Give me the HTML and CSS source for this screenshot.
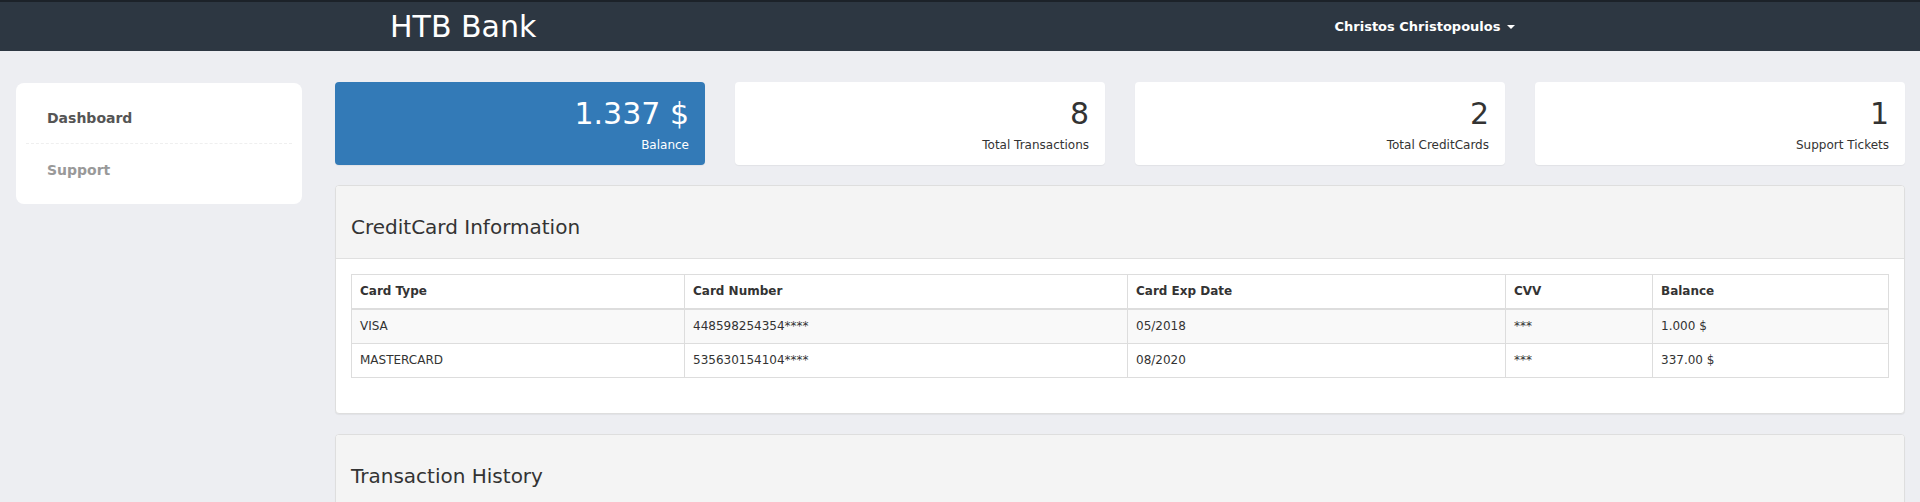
FILE: index.html
```html
<!DOCTYPE html>
<html lang="en">
<head>
<meta charset="utf-8">
<title>HTB Bank</title>
<link rel="stylesheet" href="styles.css">
</head>
<body>
<header class="navbar">
  <div class="navbar-inner">
    <a class="brand" href="#">HTB Bank</a>
    <a class="user-menu" href="#">Christos Christopoulos <span class="caret"></span></a>
  </div>
</header>

<div class="layout">
  <aside class="sidebar-col">
    <nav class="sidebar">
      <ul class="side-list">
        <li class="side-item active"><a href="#">Dashboard</a></li>
        <li class="side-item"><a href="#">Support</a></li>
      </ul>
    </nav>
  </aside>

  <main class="main-col">
    <section class="stats">
      <div class="stat stat-primary">
        <div class="stat-value">1.337 $</div>
        <div class="stat-label">Balance</div>
      </div>
      <div class="stat">
        <div class="stat-value">8</div>
        <div class="stat-label">Total Transactions</div>
      </div>
      <div class="stat">
        <div class="stat-value">2</div>
        <div class="stat-label">Total CreditCards</div>
      </div>
      <div class="stat">
        <div class="stat-value">1</div>
        <div class="stat-label">Support Tickets</div>
      </div>
    </section>

    <section class="panel">
      <div class="panel-heading">
        <h3 class="panel-title">CreditCard Information</h3>
      </div>
      <div class="panel-body">
        <table class="cards-table">
          <thead>
            <tr>
              <th>Card Type</th>
              <th>Card Number</th>
              <th>Card Exp Date</th>
              <th>CVV</th>
              <th>Balance</th>
            </tr>
          </thead>
          <tbody>
            <tr>
              <td>VISA</td>
              <td>448598254354****</td>
              <td>05/2018</td>
              <td>***</td>
              <td>1.000 $</td>
            </tr>
            <tr>
              <td>MASTERCARD</td>
              <td>535630154104****</td>
              <td>08/2020</td>
              <td>***</td>
              <td>337.00 $</td>
            </tr>
          </tbody>
        </table>
      </div>
    </section>

    <section class="panel">
      <div class="panel-heading">
        <h3 class="panel-title">Transaction History</h3>
      </div>
      <div class="panel-body">
        <div class="panel-spacer"></div>
      </div>
    </section>
  </main>
</div>
</body>
</html>
```

FILE: styles.css
```css
* { box-sizing: border-box; }

html, body {
  margin: 0;
  padding: 0;
}

body {
  font-family: "DejaVu Sans", "Noto Sans", sans-serif;
  font-size: 12px;
  line-height: 1.42857;
  color: #333;
  background: #edeef2;
}

a { text-decoration: none; }

/* Navbar */
.navbar {
  background: #2d3742;
  border-top: 2px solid #1c2229;
  height: 51px;
}

.navbar-inner {
  width: 1170px;
  margin: 0 auto;
  height: 49px;
  display: flex;
  align-items: center;
  justify-content: space-between;
  padding-left: 15px;
  padding-right: 30px;
}

.brand {
  color: #fff;
  font-size: 30px;
  line-height: 36px;
}

.user-menu {
  color: #fff;
  font-weight: bold;
  font-size: 13px;
  line-height: 18px;
  display: flex;
  align-items: center;
  white-space: pre;
}

.caret {
  display: inline-block;
  width: 0;
  height: 0;
  margin-left: 2px;
  border-top: 4px solid #fff;
  border-left: 4px solid transparent;
  border-right: 4px solid transparent;
}

/* Layout */
.layout {
  display: flex;
  padding-top: 31px;
}

.sidebar-col {
  width: 320px;
  flex: none;
  padding: 1px 18px 0 16px;
}

.sidebar {
  background: #fff;
  border-radius: 8px;
  padding: 9px 10px;
}

.side-list {
  list-style: none;
  margin: 0;
  padding: 0;
}

.side-item + .side-item {
  border-top: 1px dashed #efefef;
}

.side-item a {
  display: block;
  padding: 16px 20px 15px 21px;
  font-size: 14px;
  line-height: 20px;
  font-weight: bold;
  color: #999;
}

.side-item.active a {
  color: #555;
}

.main-col {
  flex: 1;
  min-width: 0;
  padding: 0 15px;
}

/* Stats */
.stats {
  display: grid;
  grid-template-columns: repeat(4, 1fr);
  gap: 30px;
  margin-bottom: 20px;
}

.stat {
  background: #fff;
  border-radius: 4px;
  box-shadow: 0 1px 1px rgba(0, 0, 0, 0.05);
  padding: 14px 16px 11px;
  text-align: right;
  height: 83px;
}

.stat-primary {
  background: #337ab7;
  color: #fff;
}

.stat-value {
  font-size: 30px;
  line-height: 36px;
  margin-bottom: 5px;
}

.stat-label {
  font-size: 12px;
  line-height: 17px;
}

/* Panels */
.panel {
  background: #fff;
  border: 1px solid #dedede;
  border-radius: 4px;
  box-shadow: 0 1px 1px rgba(0, 0, 0, 0.05);
  margin-bottom: 20px;
  overflow: hidden;
}

.panel-heading {
  background: #f4f4f4;
  border-bottom: 1px solid #e0e0e0;
  padding: 10px 15px;
}

.panel-title {
  margin: 20px 0 10px;
  font-size: 20px;
  line-height: 22px;
  font-weight: normal;
  color: #333;
}

.panel-body {
  padding: 15px;
}

.panel-spacer {
  height: 60px;
}

/* Table */
.cards-table {
  width: 100%;
  border-collapse: collapse;
  table-layout: fixed;
  margin-bottom: 20px;
  font-size: 12px;
}

.cards-table th,
.cards-table td {
  border: 1px solid #ddd;
  padding: 8px;
  line-height: 17px;
  text-align: left;
  vertical-align: top;
}

.cards-table th {
  font-weight: bold;
  border-bottom: 2px solid #ddd;
}

.cards-table th:nth-child(1) { width: 333px; }
.cards-table th:nth-child(2) { width: 443px; }
.cards-table th:nth-child(3) { width: 378px; }
.cards-table th:nth-child(4) { width: 147px; }

.cards-table tbody tr:nth-child(odd) {
  background: #f9f9f9;
}
```
